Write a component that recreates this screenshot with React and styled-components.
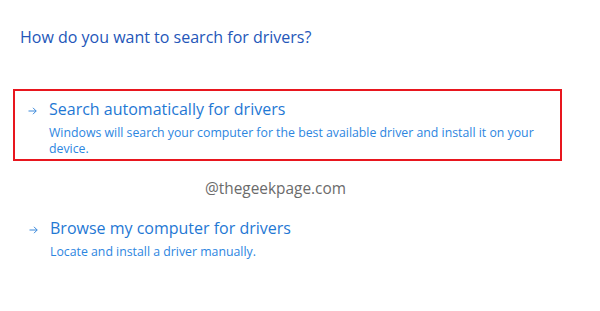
import React from 'react';
import styled, { createGlobalStyle } from 'styled-components';

const GlobalStyle = createGlobalStyle`
  html, body {
    margin: 0;
    padding: 0;
    background: #ffffff;
  }
  body {
    font-family: "Open Sans", "Noto Sans", sans-serif;
  }
`;

const Page = styled.div`
  width: 600px;
  height: 311px;
  box-sizing: border-box;
  padding-top: 26px;
  overflow: hidden;
  background: #ffffff;
`;

const Heading = styled.h1`
  margin: 0 0 0 20px;
  font-size: 16px;
  line-height: 22px;
  font-weight: 400;
  color: #2456b9;
`;

const OptionList = styled.div`
  display: flex;
  flex-direction: column;
`;

const Option = styled.div`
  display: flex;
  align-items: flex-start;
  gap: 12px;
  width: 549px;
  box-sizing: border-box;
  margin: ${(p) => p.$top}px 0 0 13px;
  padding: ${(p) => (p.$highlighted ? '7px 12px 2px 13px' : '0 12px 0 14px')};
  border: 2px solid ${(p) => (p.$highlighted ? '#e8161e' : 'transparent')};
`;

const Arrow = styled.svg`
  flex: none;
  width: 9px;
  height: 8px;
  margin-top: 9px;
  color: #3a88da;
`;

const OptionText = styled.div`
  display: flex;
  flex-direction: column;
`;

const OptionTitle = styled.div`
  font-size: 16px;
  line-height: 22px;
  color: #1f78d4;
`;

const OptionDesc = styled.div`
  margin-top: 5px;
  font-size: 12.3px;
  line-height: 16px;
  color: #2d86df;
`;

const Watermark = styled.div`
  margin: 18px 0 0 205px;
  font-size: 15.4px;
  line-height: 20px;
  color: #6b6b6b;
`;

const ArrowIcon = () => (
  <Arrow viewBox="0 0 9 8" fill="none" stroke="currentColor" strokeWidth="1">
    <path d="M0.5 4H8.2M5 0.8L8.2 4L5 7.2" />
  </Arrow>
);

export default function App() {
  return (
    <>
      <GlobalStyle />
      <Page>
        <Heading>How do you want to search for drivers?</Heading>
        <OptionList>
          <Option $highlighted $top={41}>
            <ArrowIcon />
            <OptionText>
              <OptionTitle>Search automatically for drivers</OptionTitle>
              <OptionDesc>
                Windows will search your computer for the best available driver and install it on your
                device.
              </OptionDesc>
            </OptionText>
          </Option>
          <Watermark>@thegeekpage.com</Watermark>
          <Option $top={16}>
            <ArrowIcon />
            <OptionText>
              <OptionTitle>Browse my computer for drivers</OptionTitle>
              <OptionDesc>Locate and install a driver manually.</OptionDesc>
            </OptionText>
          </Option>
        </OptionList>
      </Page>
    </>
  );
}
